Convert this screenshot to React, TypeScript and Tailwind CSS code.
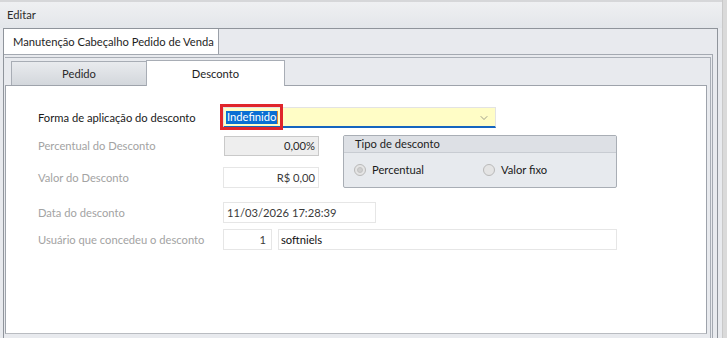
import { ChevronDown } from "lucide-react";

const font = "font-['Lato',sans-serif]";

const Label = ({ children, dim = true }: { children: React.ReactNode; dim?: boolean }) => (
  <div className={`w-[185px] shrink-0 whitespace-nowrap ${dim ? "text-[#a3a3a3]" : "text-[#1a1a1a]"}`}>{children}</div>
);

const Radio = ({ checked, label }: { checked?: boolean; label: string }) => (
  <div className="flex items-center gap-[6px]">
    <div className="w-[12px] h-[12px] rounded-full border border-[#b9b9b9] bg-[#e4e4e4] flex items-center justify-center">
      {checked && <div className="w-[6px] h-[6px] rounded-full bg-[#cfcfcf] border border-[#c2c2c2]" />}
    </div>
    <span className="text-[#1a1a1a]">{label}</span>
  </div>
);

export default function App() {
  return (
    <div className={`w-[727px] h-[338px] overflow-hidden flex bg-[#e8eaee] text-[11.2px] leading-none whitespace-nowrap ${font}`}>
      <div className="flex-1 flex flex-col">
        {/* cabeçalho */}
        <div className="h-[28px] shrink-0 border-t-[2px] border-[#d6d7d9] bg-gradient-to-b from-[#eff0f2] to-[#e3e6ea] flex items-center pl-[7px] text-[#2b2b2b]">
          Editar
        </div>

        {/* tab control externo */}
        <div className="flex-1 ml-[3px] mr-[4px] border-t border-r border-l border-[#8f949b] flex flex-col">
          <div className="h-[25px] shrink-0 flex">
            <div className="w-[215px] bg-white border-r border-[#9ba0a8] flex items-center pl-[9px] text-[#1e1e1e]">
              Manutenção Cabeçalho Pedido de Venda
            </div>
            <div className="flex-1" />
          </div>

          <div className="flex-1 border-t border-r border-[#a4a9b1] mr-[4px] flex flex-col pt-[2px] pl-[1px]">
            <div className="flex-1 border-t border-r border-[#a9aeb6] mr-[1px] flex flex-col">
              {/* abas internas */}
              <div className="h-[27px] shrink-0 flex items-end pl-[6px] pr-[6px]">
                <div className="w-[135px] h-[24px] border-l border-t border-[#a8adb5] bg-gradient-to-b from-[#e9ebee] to-[#d3d7dc] flex items-center justify-center text-[#2a2a2a]">
                  Pedido
                </div>
                <div className="w-[139px] h-[26px] border-l border-t border-r border-[#a8adb5] bg-white flex items-center justify-center text-[#1e1e1e] -mb-px relative">
                  Desconto
                </div>
                <div className="flex-1" />
              </div>

              <div className="flex-1 flex mr-[3px]">
                <div className="flex-1 bg-white border border-[#9ea3ab] border-b-[#b9bcc1] mb-[4px] pt-[21px] pl-[32px] flex flex-col">
                  {/* forma de aplicação */}
                  <div className="flex items-center h-[21px]">
                    <Label dim={false}>Forma de aplicação do desconto</Label>
                    <div className="relative w-[273px] h-[21px] bg-[#fffdc6] border-l border-t border-r border-[#e3e3e3] border-b-[2px] border-b-[#1565c0] flex items-center pl-[2px]">
                      <span className="bg-[#0a6fd3] text-white px-px h-[13px] flex items-center">Indefinido</span>
                      <span className="w-px h-[13px] bg-[#e38b2c]" />
                      <ChevronDown className="absolute right-[5px] top-[4px] w-[12px] h-[12px] text-[#6b6b6b]" strokeWidth={1.3} />
                      <div className="absolute -left-[4px] -top-[4px] w-[63px] h-[26px] border-[3px] border-[#e0252b]" />
                    </div>
                  </div>

                  {/* percentual / valor + tipo */}
                  <div className="flex mt-[7px]">
                    <div className="flex flex-col w-[305px]">
                      <div className="flex items-center h-[20px] mt-[1px]">
                        <Label>Percentual do Desconto</Label>
                        <div className="ml-px w-[95px] h-[20px] bg-[#eeeeee] border border-[#c9c9c9] flex items-center justify-end pr-[3px] text-[#2a2a2a]">
                          0,00%
                        </div>
                      </div>
                      <div className="flex items-center h-[21px] mt-[11px]">
                        <Label>Valor do Desconto</Label>
                        <div className="w-[96px] h-[21px] bg-white border border-[#e6e6e6] flex items-center justify-end pr-[3px] text-[#3a3a3a]">
                          R$ 0,00
                        </div>
                      </div>
                    </div>
                    <div className="w-[274px] h-[53px] border border-[#a9aeb5] rounded-[2px] bg-[#e7eaee] flex flex-col">
                      <div className="h-[17px] bg-[#dde0e5] border-b border-[#c8ccd2] flex items-center pl-[11px] text-[#1e1e1e]">
                        Tipo de desconto
                      </div>
                      <div className="flex-1 flex items-center pl-[10px]">
                        <div className="w-[129px]">
                          <Radio checked label="Percentual" />
                        </div>
                        <Radio label="Valor fixo" />
                      </div>
                    </div>
                  </div>

                  {/* data */}
                  <div className="flex items-center h-[21px] mt-[14px]">
                    <Label>Data do desconto</Label>
                    <div className="w-[153px] h-[21px] bg-white border border-[#e6e6e6] flex items-center pl-[3px] text-[#3a3a3a]">
                      11/03/2026 17:28:39
                    </div>
                  </div>

                  {/* usuário */}
                  <div className="flex items-center h-[21px] mt-[6px]">
                    <Label>Usuário que concedeu o desconto</Label>
                    <div className="w-[49px] h-[21px] bg-white border border-[#e6e6e6] flex items-center justify-end pr-[5px] text-[#3a3a3a]">
                      1
                    </div>
                    <div className="ml-[6px] w-[339px] h-[21px] bg-white border border-[#e6e6e6] flex items-center pl-[2px] text-[#111]">
                      softniels
                    </div>
                  </div>
                </div>
              </div>
            </div>
          </div>
        </div>
      </div>
      <div className="w-[5px] border-l border-[#c9c9c9] bg-[#dadada]" />
    </div>
  );
}
